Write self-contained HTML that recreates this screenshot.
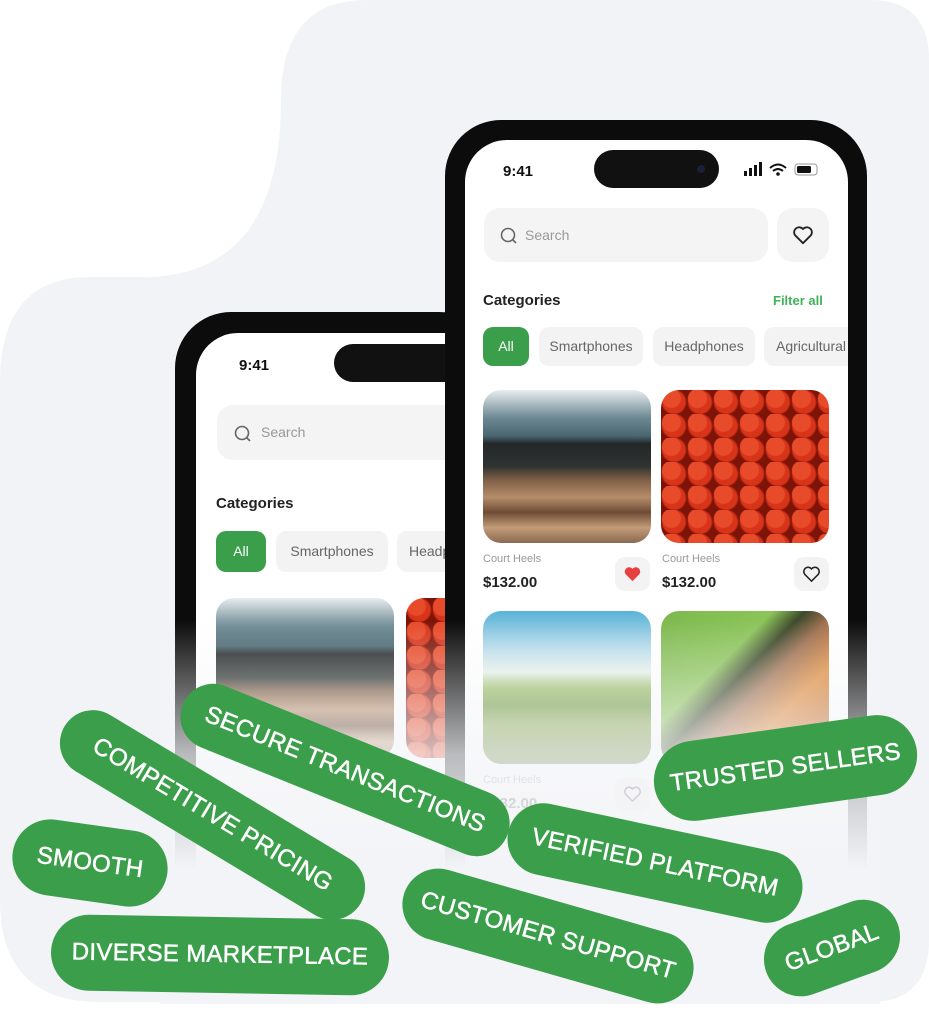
<!DOCTYPE html>
<html><head><meta charset="utf-8"><style>
*{margin:0;padding:0;box-sizing:border-box}
body{width:929px;height:1004px;overflow:hidden;background:#fff;font-family:"Liberation Sans",sans-serif;position:relative}
.abs{position:absolute}
.phone{position:absolute;background:#0c0c0c;border-radius:56px}
.screen{position:absolute;background:#fff;border-radius:42px;overflow:hidden}
.time{position:absolute;font-weight:bold;font-size:15px;color:#111}
.island{position:absolute;background:#111;border-radius:20px}
.search{position:absolute;background:#f4f4f5;border-radius:16px;color:#999;font-size:14px}
.cat{position:absolute;font-weight:bold;font-size:15px;color:#222}
.chip{position:absolute;background:#f3f3f4;border-radius:10px;color:#666;font-size:14px;text-align:center}
.chip.g{background:#3a9e4a;color:#fff}
.img{position:absolute;border-radius:18px;overflow:hidden}
.desert{background:linear-gradient(#e8ecee 0%,#6d8a94 18%,#4a6670 30%,#23282a 35%,#2e3330 50%,#7a5c44 58%,#b68d69 70%,#6e4c36 80%,#c39c78 90%,#8a6a50 100%)}
.tom{background:radial-gradient(circle at 40% 35%,#e84b2a 0 9px,transparent 10px) 0 0/26px 24px,radial-gradient(circle at 50% 50%,#d8341a 0 11px,#7e1408 13px) 0 0/26px 24px,#a81c0a}
.field{background:linear-gradient(#5ab3d8 0%,#b8dcea 25%,#e7f1e9 40%,#9cbf6a 50%,#6f9a3e 62%,#89a850 75%,#5a7a30 100%)}
.veg{background:linear-gradient(135deg,#7db84e 0%,#8cc45a 35%,#3e4a2c 45%,#a07050 55%,#e08a3a 70%,#c8702e 85%,#7a1e2a 100%)}
.small{position:absolute;font-size:11px;color:#999}
.price{position:absolute;font-size:15px;font-weight:bold;color:#222}
.hb{position:absolute;background:#f3f3f4;border-radius:10px}
.pill{position:absolute;background:#3a9e4a;color:#fff;border-radius:40px;display:flex;align-items:center;justify-content:center;font-size:24px;letter-spacing:0.3px;white-space:nowrap;-webkit-text-stroke:0.5px #fff}
</style></head><body>
<svg class="abs" style="left:0;top:0" width="929" height="1004"><path d="M367 0 H870 Q929 0 929 60 V940 Q929 1002 870 1002 H100 Q0 1002 0 900 V383 Q0 277 90 277 H142 Q281 277 281 100 Q281 0 367 0 Z" fill="#f2f3f7"/></svg>

<!-- back phone -->
<div class="phone" style="left:175px;top:312px;width:320px;height:620px"></div>
<div class="screen" style="left:196px;top:333px;width:290px;height:600px">
  <div class="time" style="left:43px;top:24px">9:41</div>
  <div class="island" style="left:138px;top:11px;width:130px;height:38px"></div>
  <div class="search" style="left:21px;top:72px;width:260px;height:55px"><svg class="abs" style="left:17px;top:20px" width="18" height="18"><circle cx="8" cy="8" r="6.5" fill="none" stroke="#666" stroke-width="1.6"/><path d="M13 13 L16 16" stroke="#666" stroke-width="1.6"/></svg><span class="abs" style="left:44px;top:19px">Search</span></div>
  <div class="cat" style="left:20px;top:162px">Categories</div>
  <div class="chip g" style="left:20px;top:198px;width:50px;height:41px;line-height:41px">All</div>
  <div class="chip" style="left:80px;top:198px;width:112px;height:41px;line-height:41px">Smartphones</div>
  <div class="chip" style="left:201px;top:198px;width:100px;height:41px;line-height:41px;text-align:left;padding-left:12px">Headphones</div>
  <div class="img desert" style="left:20px;top:265px;width:178px;height:160px"></div>
  <div class="img tom" style="left:210px;top:265px;width:60px;height:160px"></div>
</div>

<!-- front phone -->
<div class="phone" style="left:445px;top:120px;width:422px;height:820px"></div>
<div class="screen" style="left:465px;top:140px;width:383px;height:800px">
  <div class="time" style="left:38px;top:23px">9:41</div>
  <div class="island" style="left:129px;top:10px;width:125px;height:38px"><div class="abs" style="left:103px;top:15px;width:8px;height:8px;border-radius:4px;background:#1a1f3a"></div></div>
  <svg class="abs" style="left:278px;top:22px" width="80" height="16"><rect x="1" y="9" width="3" height="5" fill="#111"/><rect x="6" y="6" width="3" height="8" fill="#111"/><rect x="11" y="3" width="3" height="11" fill="#111"/><rect x="16" y="0" width="3" height="14" fill="#111"/><path d="M27 6 Q35 -1 43 6 M30 9 Q35 5 40 9" stroke="#111" stroke-width="2" fill="none"/><circle cx="35" cy="12" r="1.8" fill="#111"/><rect x="52" y="2" width="22" height="11" rx="3" fill="none" stroke="#999" stroke-width="1"/><rect x="54" y="4" width="14" height="7" rx="1.5" fill="#111"/></svg>
  <div class="search" style="left:19px;top:68px;width:284px;height:54px"><svg class="abs" style="left:16px;top:19px" width="18" height="18"><circle cx="8" cy="8" r="6.5" fill="none" stroke="#666" stroke-width="1.6"/><path d="M13 13 L16 16" stroke="#666" stroke-width="1.6"/></svg><span class="abs" style="left:41px;top:19px">Search</span></div>
  <div class="search" style="left:312px;top:68px;width:52px;height:54px"><svg class="abs" style="left:15px;top:17px" width="22" height="20" viewBox="0 0 24 22"><path d="M12 20 L3.5 11.5 A5 5 0 0 1 12 4.5 A5 5 0 0 1 20.5 11.5 Z" fill="none" stroke="#222" stroke-width="2" stroke-linejoin="round"/></svg></div>
  <div class="cat" style="left:18px;top:152px">Categories</div>
  <div class="abs" style="left:308px;top:153px;font-size:13px;font-weight:bold;color:#3fb25a">Filter all</div>
  <div class="chip g" style="left:18px;top:187px;width:46px;height:39px;line-height:39px">All</div>
  <div class="chip" style="left:74px;top:187px;width:104px;height:39px;line-height:39px">Smartphones</div>
  <div class="chip" style="left:188px;top:187px;width:102px;height:39px;line-height:39px">Headphones</div>
  <div class="chip" style="left:299px;top:187px;width:100px;height:39px;line-height:39px;text-align:left;padding-left:12px">Agricultural</div>
  <div class="img desert" style="left:18px;top:250px;width:168px;height:153px"></div>
  <div class="img tom" style="left:196px;top:250px;width:168px;height:153px"></div>
  <div class="small" style="left:18px;top:413px">Court Heels</div>
  <div class="price" style="left:18px;top:434px">$132.00</div>
  <div class="hb" style="left:150px;top:417px;width:35px;height:34px"><svg class="abs" style="left:8px;top:8px" width="19" height="18" viewBox="0 0 24 22"><path d="M12 20 L3.5 11.5 A5 5 0 0 1 12 4.5 A5 5 0 0 1 20.5 11.5 Z" fill="#e8403f"/></svg></div>
  <div class="small" style="left:197px;top:413px">Court Heels</div>
  <div class="price" style="left:197px;top:434px">$132.00</div>
  <div class="hb" style="left:329px;top:417px;width:35px;height:34px"><svg class="abs" style="left:8px;top:8px" width="19" height="18" viewBox="0 0 24 22"><path d="M12 20 L3.5 11.5 A5 5 0 0 1 12 4.5 A5 5 0 0 1 20.5 11.5 Z" fill="none" stroke="#222" stroke-width="2"/></svg></div>
  <div class="img field" style="left:18px;top:471px;width:168px;height:153px"></div>
  <div class="img veg" style="left:196px;top:471px;width:168px;height:153px"></div>
  <div class="small" style="left:18px;top:634px">Court Heels</div>
  <div class="price" style="left:18px;top:655px">$132.00</div>
  <div class="hb" style="left:150px;top:637px;width:35px;height:34px"><svg class="abs" style="left:8px;top:8px" width="19" height="18" viewBox="0 0 24 22"><path d="M12 20 L3.5 11.5 A5 5 0 0 1 12 4.5 A5 5 0 0 1 20.5 11.5 Z" fill="none" stroke="#222" stroke-width="2"/></svg></div>
</div>

<!-- fade -->
<div class="abs" style="left:160px;top:620px;width:720px;height:384px;background:linear-gradient(rgba(244,245,248,0) 0%,rgba(244,245,248,0.75) 35%,#f3f4f7 65%)"></div>

<!-- pills -->
<div class="pill" style="left:170px;top:737px;width:350px;height:66px;transform:rotate(22deg)">SECURE TRANSACTIONS</div>
<div class="pill" style="left:40px;top:782px;width:345px;height:66px;transform:rotate(31deg)">COMPETITIVE PRICING</div>
<div class="pill" style="left:12px;top:825px;width:156px;height:76px;transform:rotate(8deg)">SMOOTH</div>
<div class="pill" style="left:51px;top:917px;width:338px;height:76px;transform:rotate(1deg)">DIVERSE MARKETPLACE</div>
<div class="pill" style="left:398px;top:900px;width:300px;height:72px;transform:rotate(16deg)">CUSTOMER SUPPORT</div>
<div class="pill" style="left:505px;top:827px;width:300px;height:72px;transform:rotate(12deg)">VERIFIED PLATFORM</div>
<div class="pill" style="left:653px;top:728px;width:265px;height:80px;transform:rotate(-8deg)">TRUSTED SELLERS</div>
<div class="pill" style="left:762px;top:911px;width:140px;height:74px;transform:rotate(-20deg)">GLOBAL</div>
</body></html>
